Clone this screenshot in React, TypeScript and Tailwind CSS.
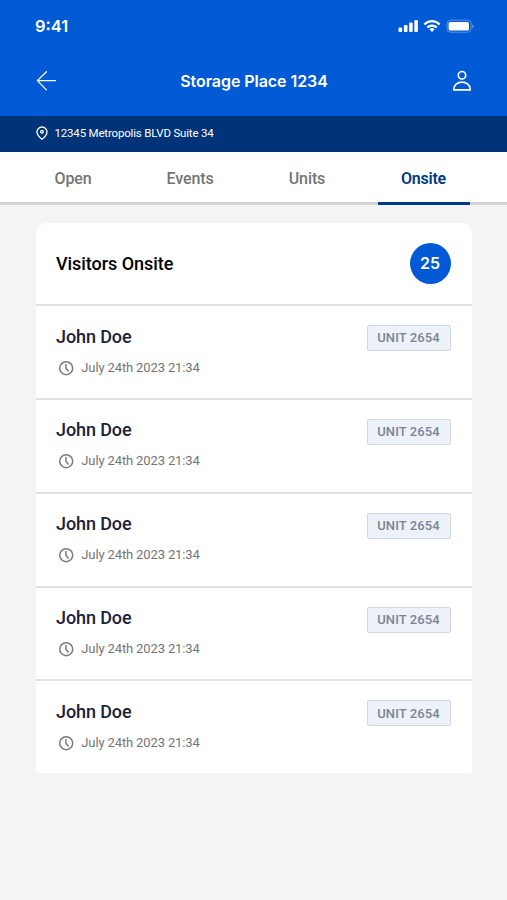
type Visitor = {
  id: number;
  name: string;
  visitedAt: string;
  unit: string;
};

const tabs = ["Open", "Events", "Units", "Onsite"];
const activeTab = "Onsite";

const visitors: Visitor[] = [1, 2, 3, 4, 5].map((id) => ({
  id,
  name: "John Doe",
  visitedAt: "July 24th 2023 21:34",
  unit: "UNIT 2654",
}));

function StatusIcons() {
  return (
    <svg width="76" height="16" viewBox="0 0 76 16" fill="#fff">
      <rect x="0.5" y="9.5" width="3.6" height="4.5" rx="1" />
      <rect x="5.9" y="7" width="3.6" height="7" rx="1" />
      <rect x="11.1" y="4.6" width="3.6" height="9.4" rx="1" />
      <rect x="16.3" y="2" width="3.6" height="12" rx="1" />
      <g fill="none" stroke="#fff" strokeWidth="2.2">
        <path d="M26.4 6.4a10.6 10.6 0 0 1 15.2 0" />
        <path d="M29.3 9.5a6.6 6.6 0 0 1 9.4 0" />
      </g>
      <path d="M34 14l-2.6-2.7a3.8 3.8 0 0 1 5.2 0z" />
      <rect x="49" y="2.2" width="24" height="12" rx="3.4" fill="none" stroke="#fff" strokeOpacity="0.35" />
      <rect x="50.6" y="4.1" width="20.4" height="8.4" rx="1.5" />
      <path d="M74.2 6.2v4.2a2.3 2.3 0 0 0 0-4.2z" fillOpacity="0.4" />
    </svg>
  );
}

function ArrowLeftIcon() {
  return (
    <svg width="20" height="20" viewBox="0 0 20 20" fill="none" stroke="#fff" strokeWidth="1.3" strokeLinecap="round" strokeLinejoin="round">
      <path d="M19.4 9.6H1.4M10.4 .8L1.4 9.6l9 9.3" />
    </svg>
  );
}

function UserIcon() {
  return (
    <svg width="20" height="22" viewBox="0 0 20 22" fill="none" stroke="#fff" strokeWidth="1.7" strokeLinejoin="round">
      <circle cx="10" cy="5.2" r="3.7" />
      <path d="M1.8 19.9v-.7c0-4.1 3.6-7.1 8.2-7.1s8.2 3 8.2 7.1v.7z" />
    </svg>
  );
}

function PinIcon() {
  return (
    <svg width="12" height="14" viewBox="0 0 12 14" fill="none" stroke="#fff" strokeWidth="1.3" strokeLinejoin="round">
      <path d="M6 13.3C3.2 11.1 1 8.7 1 6a5 5 0 0 1 10 0c0 2.7-2.2 5.1-5 7.3z" />
      <circle cx="6" cy="5.7" r="1.3" />
    </svg>
  );
}

function ClockIcon() {
  return (
    <svg width="16" height="16" viewBox="0 0 16 16" fill="none" stroke="#7b7b7b" strokeWidth="1.5" strokeLinecap="round" strokeLinejoin="round">
      <circle cx="8.2" cy="8.2" r="6.5" />
      <path d="M7.9 4.4v3.8l2.3 2.7" />
    </svg>
  );
}

function VisitorRow({ visitor }: { visitor: Visitor }) {
  return (
    <li className="flex h-[93.8px] items-start justify-between border-t-2 border-[#e0e0e0] pr-[21px] pl-5">
      <div className="pt-[19.4px]">
        <h3 className="text-[18px] leading-[22px] font-medium tracking-[-0.1px] whitespace-nowrap text-[#1c2238]">
          {visitor.name}
        </h3>
        <div className="mt-[12px] flex items-center gap-[7px] pl-[2.3px]">
          <ClockIcon />
          <p className="text-[13px] leading-4 tracking-[-0.13px] whitespace-nowrap text-[#757575]">{visitor.visitedAt}</p>
        </div>
      </div>
      <span className="mt-[19px] flex h-[26px] w-[84px] items-center justify-center rounded-[2px] border border-[#d0d8e2] bg-[#edf2f9] text-[13px] font-medium tracking-[0.1px] whitespace-nowrap text-[#7b8494]">
        {visitor.unit}
      </span>
    </li>
  );
}

export default function App() {
  return (
    <main className="flex h-[900px] w-full flex-col overflow-hidden bg-[#f4f4f4] font-['Roboto','Liberation_Sans',sans-serif]">
      <header className="h-[116px] bg-[#005ad6] text-white">
        <div className="flex h-[52px] items-center justify-between pr-[33px] pl-[35px]">
          <span className="font-['Inter',sans-serif] text-[16.5px] font-semibold">9:41</span>
          <StatusIcons />
        </div>
        <div className="flex h-[58px] items-center justify-between pr-[35px] pl-9">
          <ArrowLeftIcon />
          <h1 className="font-['Inter',sans-serif] text-[16px] font-semibold tracking-[-0.06px] whitespace-nowrap">
            Storage Place 1234
          </h1>
          <UserIcon />
        </div>
      </header>

      <div className="flex h-[35.5px] shrink-0 items-center gap-[7px] bg-[#003377] pb-px pl-[35.5px] text-white">
        <PinIcon />
        <p className="text-[11.5px] leading-4 tracking-[-0.18px]">12345 Metropolis BLVD Suite 34</p>
      </div>

      <nav className="flex h-[53.5px] shrink-0 border-b-[3px] border-[#d5d5d5] bg-white pl-[14.5px]">
        {tabs.map((tab) => (
          <button
            key={tab}
            type="button"
            className={
              tab === activeTab
                ? "-mb-[3px] ml-3 w-[92px] border-b-[3px] border-[#003985] pt-[5px] text-[16px] font-semibold tracking-[-0.25px] text-[#003985]"
                : "w-[117px] pt-[5px] text-[16px] font-medium tracking-[-0.1px] text-[#757575]"
            }
          >
            {tab}
          </button>
        ))}
      </nav>

      <section className="mt-[18px] mr-[35.5px] ml-9 overflow-hidden rounded-t-[10px] rounded-b-[4px] bg-white">
        <div className="flex h-[81.2px] items-center justify-between pr-[21px] pl-5">
          <h2 className="pb-px text-[18px] font-medium tracking-[-0.05px] text-black">Visitors Onsite</h2>
          <span className="flex size-[41px] items-center justify-center rounded-full bg-[#005ad6] pb-px font-['Inter',sans-serif] text-[16px] font-semibold text-white">
            25
          </span>
        </div>
        <ul>
          {visitors.map((visitor) => (
            <VisitorRow key={visitor.id} visitor={visitor} />
          ))}
        </ul>
      </section>
    </main>
  );
}
